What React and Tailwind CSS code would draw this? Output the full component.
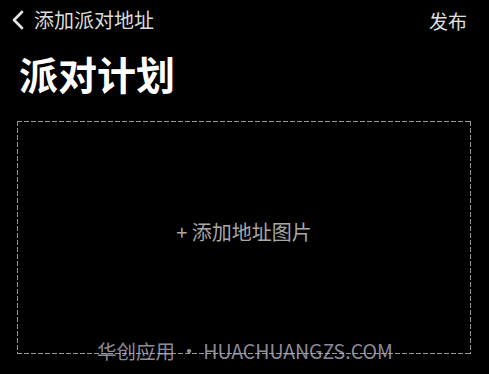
import React from "react";

const App = () => {
  return (
    <div
      className="relative w-[489px] h-[374px] bg-black overflow-hidden"
      style={{ fontFamily: '"Noto Sans CJK SC", "Noto Sans", sans-serif' }}
    >
      {/* top bar */}
      <div className="flex items-center justify-between h-[40px] pl-[11px] pr-[22px]">
        <div className="flex items-center gap-[9px]">
          <svg width="14" height="20" viewBox="0 0 14 20" fill="none">
            <path d="M11 2 L3 10 L11 18" stroke="#e5e5e5" strokeWidth="2.6" strokeLinecap="round" strokeLinejoin="round" />
          </svg>
          <span className="text-[20px] leading-none text-[#dcdcdc]">添加派对地址</span>
        </div>
        <span className="text-[19px] leading-none text-[#e0e0e0]">发布</span>
      </div>

      {/* title */}
      <h1 className="mt-[10px] ml-[19px] text-[39px] leading-[46px] font-semibold text-white">派对计划</h1>

      {/* image placeholder */}
      <div className="mt-[25px] ml-[17px] w-[454px] h-[233px] flex items-center justify-center pb-[12px] [background:repeating-linear-gradient(90deg,#9a9a9a_0_5px,transparent_5px_7px)_top_left/100%_1px_no-repeat,repeating-linear-gradient(90deg,#9a9a9a_0_5px,transparent_5px_7px)_bottom_left/100%_1px_no-repeat,repeating-linear-gradient(180deg,#9a9a9a_0_5px,transparent_5px_7px)_top_left/1px_100%_no-repeat,repeating-linear-gradient(180deg,#9a9a9a_0_5px,transparent_5px_7px)_top_right/1px_100%_no-repeat]">
        <span className="text-[20px] text-[#a8a8a8]">+ 添加地址图片</span>
      </div>

      {/* watermark */}
      <div className="absolute left-[97px] top-[339px] text-[19.5px] leading-[24px] text-[#b4b0c4]/80 whitespace-nowrap">
        华创应用 • HUACHUANGZS.COM
      </div>
    </div>
  );
};

export default App;
